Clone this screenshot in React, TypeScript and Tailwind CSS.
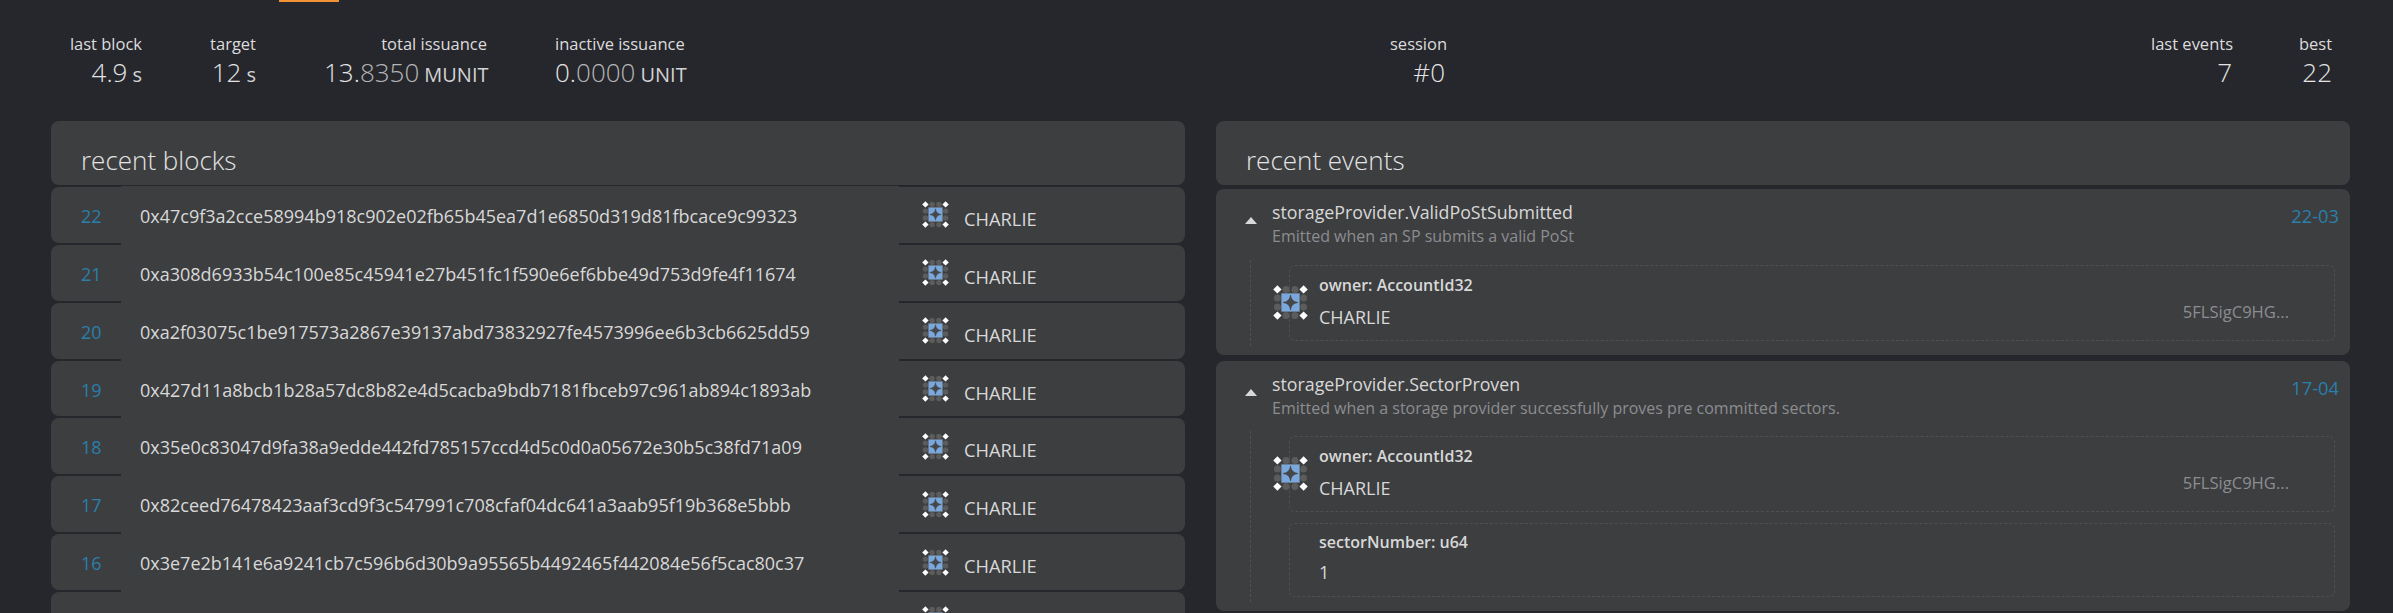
const PAGE_FONT = "font-['Open_Sans',sans-serif]";

const blocks = [
  ["22", "0x47c9f3a2cce58994b918c902e02fb65b45ea7d1e6850d319d81fbcace9c99323"],
  ["21", "0xa308d6933b54c100e85c45941e27b451fc1f590e6ef6bbe49d753d9fe4f11674"],
  ["20", "0xa2f03075c1be917573a2867e39137abd73832927fe4573996ee6b3cb6625dd59"],
  ["19", "0x427d11a8bcb1b28a57dc8b82e4d5cacba9bdb7181fbceb97c961ab894c1893ab"],
  ["18", "0x35e0c83047d9fa38a9edde442fd785157ccd4d5c0d0a05672e30b5c38fd71a09"],
  ["17", "0x82ceed76478423aaf3cd9f3c547991c708cfaf04dc641a3aab95f19b368e5bbb"],
  ["16", "0x3e7e2b141e6a9241cb7c596b6d30b9a95565b4492465f442084e56f5cac80c37"],
  ["", ""],
];

function Identicon({ size }: { size: number }) {
  const p = [3.4, 10.1, 16.9, 23.6];
  const dots: [number, number][] = [];
  for (const y of p) for (const x of p) {
    const isEdge = x === p[0] || x === p[3] || y === p[0] || y === p[3];
    const isCorner = (x === p[0] || x === p[3]) && (y === p[0] || y === p[3]);
    if (isEdge && !isCorner) dots.push([x, y]);
  }
  const corners: [number, number][] = [[p[0], p[0]], [p[3], p[0]], [p[0], p[3]], [p[3], p[3]]];
  return (
    <svg width={size} height={size} viewBox="0 0 27 27" className="shrink-0">
      {dots.map(([x, y], i) => <circle key={i} cx={x} cy={y} r="2.7" fill="#5c5c5c" />)}
      {corners.map(([x, y], i) => (
        <path key={i} d={`M${x} ${y - 3.2}L${x + 3.2} ${y}L${x} ${y + 3.2}L${x - 3.2} ${y}Z`} fill="#ffffff" />
      ))}
      <rect x="6.1" y="6.1" width="14.8" height="14.8" fill="#5c5c5c" />
      <rect x="6.6" y="6.6" width="13.8" height="13.8" fill="#7ba8dc" />
      <path d="M13.5 7.8Q14 12.9 19.2 13.5Q14 14.1 13.5 19.2Q13 14.1 7.8 13.5Q13 12.9 13.5 7.8Z" fill="#45474a" stroke="#45474a" strokeWidth="0.6" />
    </svg>
  );
}

function Stat({ label, width, children }: { label: string; width: string; children: React.ReactNode }) {
  return (
    <div className={`${width} shrink-0 text-right whitespace-nowrap`}>
      <div className="h-[24px] text-[16.5px] leading-[24px] font-normal text-[#dcdcdc]">{label}</div>
      <div className="h-[32px] text-[26px] leading-[32px] font-light text-[#e4e4e4]">{children}</div>
    </div>
  );
}

function Unit({ children }: { children: React.ReactNode }) {
  return <span className="ml-[5px] text-[20px] font-normal text-[#d2d3d4]">{children}</span>;
}

function BlockRow({ num, hash, name }: { num: string; hash: string; name: string }) {
  return (
    <div className="flex h-[57.86px]">
      <div className="w-[70px] shrink-0 py-px">
        <div className="flex h-full items-center rounded-l-[8px] bg-[#3d3e40] pl-[30px] pt-[3px] text-[18px] text-[#2a7fab]">{num}</div>
      </div>
      <div className="flex w-[778px] shrink-0 items-center bg-[#3d3e40] pl-[19px] pt-[3px] text-[18px] whitespace-nowrap text-[#d8d8d8]">{hash}</div>
      <div className="min-w-0 flex-1 py-px">
        <div className="flex h-full items-center gap-[15px] rounded-r-[8px] bg-[#3d3e40] pl-[23px]">
          <Identicon size={27} />
          <span className="pt-[8px] text-[18.3px] leading-[24px] text-[#d8d8d8]">{name}</span>
        </div>
      </div>
    </div>
  );
}

function AccountBox() {
  return (
    <div className="relative h-[76px] rounded-[6px] border border-dashed border-[#4f5052] pl-[29px] pt-[7px]">
      <div className="absolute left-[-17px] top-[19px]"><Identicon size={35} /></div>
      <div className="h-[24px] text-[16px] leading-[24px] font-semibold text-[#d8d8d8]">owner: AccountId32</div>
      <div className="mt-[8px] flex items-center justify-between pr-[45px]">
        <span className="text-[18px] leading-[24px] text-[#d8d8d8]">CHARLIE</span>
        <span className="-mt-[10px] text-[16.6px] leading-[24px] text-[#8c8d90]">5FLSigC9HG...</span>
      </div>
    </div>
  );
}

function EventCard({ title, desc, stamp, children, className, headH }: { title: string; desc: string; stamp: string; children: React.ReactNode; className: string; headH: string }) {
  return (
    <div className={`rounded-[8px] bg-[#3d3e40] ${className}`}>
      <div className={`flex ${headH} items-start`}>
        <div className="w-[56px] shrink-0 pl-[29px] pt-[28px]">
          <div className="h-0 w-0 border-x-[6px] border-b-[7px] border-x-transparent border-b-[#d8d8d8]" />
        </div>
        <div className="min-w-0 flex-1 pt-[10px]">
          <div className="h-[26px] text-[17.8px] leading-[26px] text-[#d8d8d8]">{title}</div>
          <div className="mt-[-1px] h-[24px] text-[16px] leading-[24px] text-[#8c8d90]">{desc}</div>
        </div>
        <div className="pr-[11px] pt-[14px] text-[18.3px] leading-[26px] text-[#2a7fab]">{stamp}</div>
      </div>
      <div className="ml-[34px] mr-[15px] border-l border-dashed border-[#4f5052] pl-[38px] py-[5px]">{children}</div>
      <div className="h-[9px]" />
    </div>
  );
}

export default function App() {
  return (
    <div className={`h-[613px] w-full overflow-hidden bg-[#26272c] ${PAGE_FONT}`}>
      <div className="ml-[279px] h-[2px] w-[60px] bg-[#f19135]" />
      <div className="flex h-[119px] justify-between pl-[69px] pr-[61px] pt-[30px]">
        <div className="flex gap-[68px]">
          <Stat label="last block" width="w-[73px]">4.9<Unit>s</Unit></Stat>
          <Stat label="target" width="w-[46px]">12<Unit>s</Unit></Stat>
          <Stat label="total issuance" width="w-[163px]">13.<span className="text-[#b4b5b6]">8350</span><Unit>MUNIT</Unit></Stat>
          <Stat label="inactive issuance" width="w-[129px]">0.<span className="text-[#b4b5b6]">0000</span><Unit>UNIT</Unit></Stat>
        </div>
        <Stat label="session" width="w-[55px]">#0</Stat>
        <div className="flex gap-[67px]">
          <Stat label="last events" width="w-[81px]">7</Stat>
          <Stat label="best" width="w-[33px]">22</Stat>
        </div>
      </div>
      <div className="grid grid-cols-2 gap-[31px] pl-[51px] pr-[43px]">
        <div>
          <div className="mb-px flex h-[64px] items-center rounded-[8px] bg-[#3d3e40] pl-[30px] pt-[14px] text-[26px] font-light text-[#e4e4e4]">recent blocks</div>
          {blocks.map(([n, h], i) => <BlockRow key={i} num={n} hash={h} name={h ? "CHARLIE" : ""} />)}
        </div>
        <div>
          <div className="mb-[4px] flex h-[64px] items-center rounded-[8px] bg-[#3d3e40] pl-[30px] pt-[14px] text-[26px] font-light text-[#e4e4e4]">recent events</div>
          <EventCard className="mb-[6px]" headH="h-[71px]" title="storageProvider.ValidPoStSubmitted" desc="Emitted when an SP submits a valid PoSt" stamp="22-03">
            <AccountBox />
          </EventCard>
          <EventCard className="" headH="h-[70px]" title="storageProvider.SectorProven" desc="Emitted when a storage provider successfully proves pre committed sectors." stamp="17-04">
            <AccountBox />
            <div className="mt-[11px] h-[74px] rounded-[6px] border border-dashed border-[#4f5052] pl-[29px] pt-[6px]">
              <div className="h-[24px] text-[16px] leading-[24px] font-semibold text-[#d8d8d8]">sectorNumber: u64</div>
              <div className="mt-[6px] text-[18px] leading-[24px] text-[#d8d8d8]">1</div>
            </div>
          </EventCard>
        </div>
      </div>
    </div>
  );
}
